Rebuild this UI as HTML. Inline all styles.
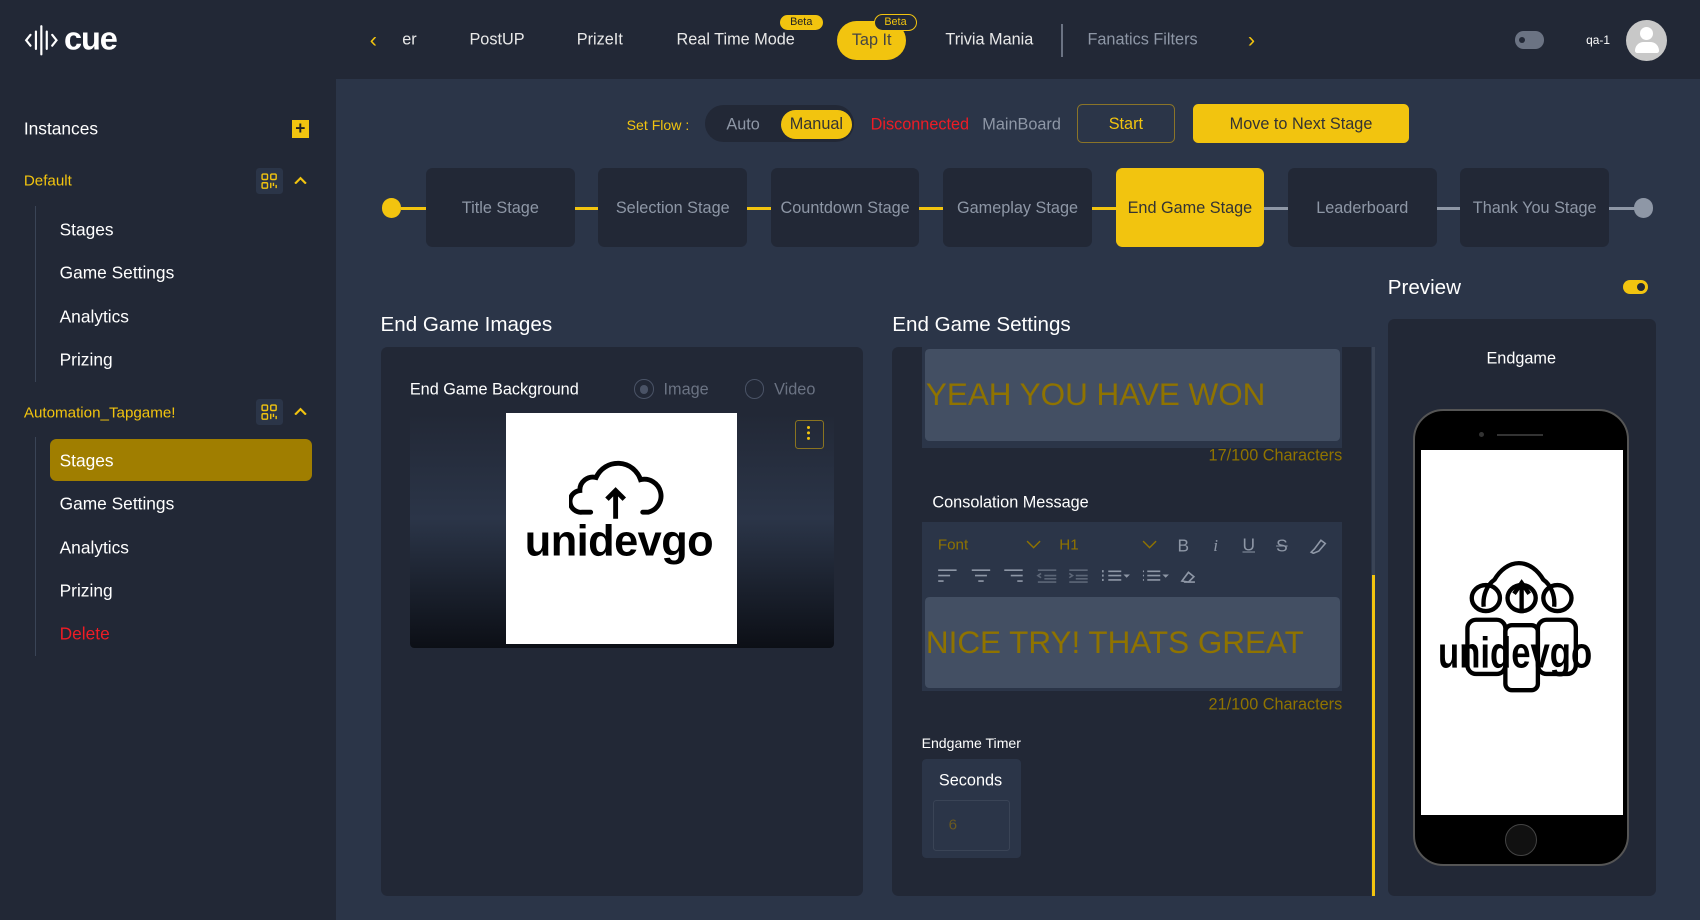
<!DOCTYPE html>
<html><head><meta charset="utf-8"><style>
html,body{margin:0;padding:0;width:1700px;height:920px;overflow:hidden;background:#2b3548}
#w{position:relative;width:1568px;height:849px;zoom:1.0842;font-family:"Liberation Sans",Arial,sans-serif;color:#e8e8e8;background:#2b3548;overflow:hidden}
.a{position:absolute}
.t{position:absolute;white-space:nowrap;transform:translateY(-50%)}
.y{color:#f2c40f}
.stage{position:absolute;top:155px;width:137px;height:73px;background:#222836;border-radius:6px;color:#8e97a6;font-size:15px;display:flex;align-items:center;justify-content:center}
.ln{position:absolute;top:191px;height:3px}
.side{font-size:16px;color:#fff}
</style></head><body><div id="w">
<div class="a" style="left:0;top:0;width:1568px;height:73px;background:#222836"></div>
<div class="a" style="left:0;top:0;width:310px;height:849px;background:#222836"></div>
<svg class="a" style="left:22px;top:22px" width="32" height="30" viewBox="0 0 32 30"><g stroke="#fff" stroke-width="2" fill="none" stroke-linecap="round"><path d="M6 10 L2 15 L6 20"/><path d="M11 7V23"/><path d="M16 2V28"/><path d="M21 7V23"/><path d="M26 10 L30 15 L26 20"/></g></svg>
<div class="t" style="left:59px;top:36px;font-size:30px;font-weight:bold;color:#fff;letter-spacing:-1px">cue</div>
<div class="t y" style="left:341px;top:37px;font-size:20px">&#8249;</div>
<div class="t" style="left:371px;top:37px;font-size:15px">er</div>
<div class="t" style="left:433px;top:37px;font-size:15px">PostUP</div>
<div class="t" style="left:532px;top:37px;font-size:15px">PrizeIt</div>
<div class="t" style="left:624px;top:37px;font-size:15px">Real Time Mode</div>
<div class="a" style="left:719px;top:14px;width:40px;height:14px;border-radius:8px;background:#f2c40f;color:#222;font-size:10px;text-align:center;line-height:14px">Beta</div>
<div class="a" style="left:772px;top:19px;width:64px;height:36px;border-radius:18px;background:#f2c40f;color:#444;font-size:15px;text-align:center;line-height:36px">Tap It</div>
<div class="a" style="left:806px;top:13px;width:38px;height:14px;border-radius:8px;background:#222836;border:1px solid #f2c40f;color:#f2c40f;font-size:10px;text-align:center;line-height:14px">Beta</div>
<div class="t" style="left:872px;top:37px;font-size:15px">Trivia Mania</div>
<div class="a" style="left:979px;top:22px;width:1px;height:31px;background:#6b7383"></div>
<div class="t" style="left:1003px;top:37px;font-size:15px;color:#8e97a6">Fanatics Filters</div>
<div class="t y" style="left:1151px;top:37px;font-size:20px">&#8250;</div>
<div class="a" style="left:1397px;top:29px;width:27px;height:16px;border-radius:8px;background:#6b7383"></div>
<div class="a" style="left:1401px;top:34px;width:6px;height:6px;border-radius:3px;background:#222836"></div>
<div class="t" style="left:1463px;top:37px;font-size:11px;color:#fff">qa-1</div>
<div class="a" style="left:1500px;top:18px;width:38px;height:38px;border-radius:19px;background:#c8c8c8"></div>
<div class="a" style="left:1513px;top:25px;width:12px;height:12px;border-radius:6px;background:#fff"></div>
<div class="a" style="left:1508px;top:39px;width:22px;height:10px;border-radius:8px 8px 2px 2px;background:#fff"></div>
<div class="t side" style="left:22px;top:119px">Instances</div>
<div class="a" style="left:269px;top:111px;width:16px;height:16px;background:#f2c40f;color:#222;font-size:16px;line-height:15px;text-align:center;font-weight:bold">+</div>
<div class="t y" style="left:22px;top:167px;font-size:14px">Default</div>
<div class="a" style="left:236px;top:155px;width:25px;height:24px;background:#2b3548;border-radius:3px"></div>
<svg class="a" style="left:241px;top:160px" width="15" height="15" viewBox="0 0 15 15"><g stroke="#f2c40f" fill="none" stroke-width="1.3"><rect x="1" y="1" width="5" height="5" rx="1"/><rect x="9" y="1" width="5" height="5" rx="1"/><rect x="1" y="9" width="5" height="5" rx="1"/><path d="M9 9v5M11.5 9v3M14 11v3"/></g></svg>
<svg class="a" style="left:271px;top:162px" width="12" height="8"><path d="M1 7L6 2L11 7" stroke="#f2c40f" stroke-width="2" fill="none"/></svg>
<div class="a" style="left:32px;top:190px;width:1px;height:162px;background:#3a4456"></div>
<div class="t side" style="left:55px;top:212px">Stages</div>
<div class="t side" style="left:55px;top:252px">Game Settings</div>
<div class="t side" style="left:55px;top:292px">Analytics</div>
<div class="t side" style="left:55px;top:332px">Prizing</div>
<div class="t y" style="left:22px;top:381px;font-size:14px">Automation_Tapgame!</div>
<div class="a" style="left:236px;top:368px;width:25px;height:24px;background:#2b3548;border-radius:3px"></div>
<svg class="a" style="left:241px;top:373px" width="15" height="15" viewBox="0 0 15 15"><g stroke="#f2c40f" fill="none" stroke-width="1.3"><rect x="1" y="1" width="5" height="5" rx="1"/><rect x="9" y="1" width="5" height="5" rx="1"/><rect x="1" y="9" width="5" height="5" rx="1"/><path d="M9 9v5M11.5 9v3M14 11v3"/></g></svg>
<svg class="a" style="left:271px;top:375px" width="12" height="8"><path d="M1 7L6 2L11 7" stroke="#f2c40f" stroke-width="2" fill="none"/></svg>
<div class="a" style="left:32px;top:403px;width:1px;height:202px;background:#3a4456"></div>
<div class="a" style="left:46px;top:405px;width:242px;height:39px;background:#a07e00;border-radius:6px"></div>
<div class="t side" style="left:55px;top:425px">Stages</div>
<div class="t side" style="left:55px;top:465px">Game Settings</div>
<div class="t side" style="left:55px;top:505px">Analytics</div>
<div class="t side" style="left:55px;top:545px">Prizing</div>
<div class="t" style="left:55px;top:585px;font-size:16px;color:#ee1c25">Delete</div>
<div class="t y" style="left:578px;top:115px;font-size:13px">Set Flow :</div>
<div class="a" style="left:650px;top:97px;width:138px;height:34px;border-radius:17px;background:#222836"></div>
<div class="t" style="left:670px;top:115px;font-size:15px;color:#8e97a6">Auto</div>
<div class="a" style="left:720px;top:101px;width:66px;height:27px;border-radius:14px;background:#f2c40f;color:#333;font-size:15px;text-align:center;line-height:27px">Manual</div>
<div class="t" style="left:803px;top:115px;font-size:15px;color:#ee1c25">Disconnected</div>
<div class="t" style="left:906px;top:115px;font-size:15px;color:#8e97a6">MainBoard</div>
<div class="a" style="left:993px;top:96px;width:89px;height:34px;border:1px solid #8a7428;border-radius:5px;color:#f2c40f;font-size:15px;text-align:center;line-height:36px">Start</div>
<div class="a" style="left:1100px;top:96px;width:200px;height:36px;background:#f2c40f;border-radius:5px;color:#333;font-size:15px;text-align:center;line-height:38px">Move to Next Stage</div>
<div class="a" style="left:352px;top:183px;width:18px;height:18px;border-radius:9px;background:#f2c40f"></div>
<div class="ln" style="left:370px;width:23px;background:#f2c40f"></div>
<div class="ln" style="left:530px;width:22px;background:#f2c40f"></div>
<div class="ln" style="left:689px;width:22px;background:#f2c40f"></div>
<div class="ln" style="left:848px;width:22px;background:#f2c40f"></div>
<div class="ln" style="left:1007px;width:22px;background:#f2c40f"></div>
<div class="ln" style="left:1166px;width:22px;background:#8e97a6"></div>
<div class="ln" style="left:1325px;width:22px;background:#8e97a6"></div>
<div class="ln" style="left:1484px;width:24px;background:#8e97a6"></div>
<div class="a" style="left:1507px;top:183px;width:18px;height:18px;border-radius:9px;background:#8e97a6"></div>
<div class="stage" style="left:393px;padding-top:2px;box-sizing:border-box">Title Stage</div>
<div class="stage" style="left:552px;padding-top:2px;box-sizing:border-box">Selection Stage</div>
<div class="stage" style="left:711px;padding-top:2px;box-sizing:border-box">Countdown Stage</div>
<div class="stage" style="left:870px;padding-top:2px;box-sizing:border-box">Gameplay Stage</div>
<div class="stage" style="left:1029px;background:#f2c40f;color:#333;padding-top:2px;box-sizing:border-box">End Game Stage</div>
<div class="stage" style="left:1188px;padding-top:2px;box-sizing:border-box">Leaderboard</div>
<div class="stage" style="left:1347px;padding-top:2px;box-sizing:border-box">Thank You Stage</div>
<div class="t" style="left:351px;top:300px;font-size:19px;color:#fff">End Game Images</div>
<div class="a" style="left:351px;top:320px;width:445px;height:506px;background:#222836;border-radius:6px"></div>
<div class="t" style="left:378px;top:360px;font-size:15px;color:#fff">End Game Background</div>
<div class="a" style="left:585px;top:350px;width:16px;height:16px;border-radius:9px;border:1px solid #4a5366"></div>
<div class="a" style="left:590px;top:355px;width:8px;height:8px;border-radius:4px;background:#4a5366"></div>
<div class="t" style="left:612px;top:360px;font-size:15px;color:#6b7383">Image</div>
<div class="a" style="left:687px;top:350px;width:16px;height:16px;border-radius:9px;border:1px solid #4a5366"></div>
<div class="t" style="left:714px;top:360px;font-size:15px;color:#6b7383">Video</div>
<div class="a" style="left:378px;top:381px;width:391px;height:217px;border-radius:4px;background:linear-gradient(#222836 0%,#2b3548 45%,#0c0f16 100%)"></div>
<div class="a" style="left:467px;top:381px;width:213px;height:213px;background:#fff"></div>
<svg class="a" style="left:525px;top:422px" width="90" height="60" viewBox="0 0 90 60"><path d="M20 50 H12 A10 10 0 0 1 10 30 A12 12 0 0 1 25 18 A22 22 0 0 1 66 20 A15 15 0 0 1 73 50 H68" stroke="#000" stroke-width="4.5" fill="none" stroke-linecap="round"/><path d="M43 56V30M35 38L43 30L51 38" stroke="#000" stroke-width="4.5" fill="none"/></svg>
<div class="t" style="left:484px;top:500px;font-size:40px;font-weight:bold;color:#000;letter-spacing:-0.5px">unidevgo</div>
<div class="a" style="left:733px;top:387px;width:25px;height:25px;border:1px solid #8a7420;border-radius:3px"></div>
<div class="a" style="left:744px;top:393px;width:3px;height:3px;border-radius:2px;background:#f2c40f;box-shadow:0 5px 0 #f2c40f,0 10px 0 #f2c40f"></div>
<div class="t" style="left:823px;top:300px;font-size:19px;color:#fff">End Game Settings</div>
<div class="a" style="left:823px;top:320px;width:442px;height:506px;background:#222836;border-radius:6px 0 0 6px"></div>
<div class="a" style="left:1265px;top:320px;width:3px;height:506px;background:#3a4456"></div>
<div class="a" style="left:1265px;top:530px;width:3px;height:296px;background:#f2c40f"></div>
<div class="a" style="left:850px;top:320px;width:388px;height:93px;background:#2b3548"></div>
<div class="a" style="left:853px;top:322px;width:383px;height:85px;background:#434f63;border-radius:4px"></div>
<div class="t" style="left:854px;top:364px;font-size:29px;color:#8f7300">YEAH YOU HAVE WON</div>
<div class="t" style="right:330px;top:421px;font-size:15px;color:#8f7300">17/100 Characters</div>
<div class="t" style="left:860px;top:464px;font-size:15px;color:#fff">Consolation Message</div>
<div class="a" style="left:850px;top:481px;width:388px;height:156px;background:#2b3548"></div>
<div class="t" style="left:865px;top:503px;font-size:14px;color:#8f7300">Font</div>
<svg class="a" style="left:946px;top:498px" width="14" height="8"><path d="M1 1L7 7L13 1" stroke="#8f7300" stroke-width="1.3" fill="none"/></svg>
<div class="t" style="left:977px;top:503px;font-size:14px;color:#8f7300">H1</div>
<svg class="a" style="left:1053px;top:498px" width="14" height="8"><path d="M1 1L7 7L13 1" stroke="#8f7300" stroke-width="1.3" fill="none"/></svg>
<div class="t" style="left:1086px;top:504px;font-size:16px;color:#8e97a6">B</div>
<div class="t" style="left:1119px;top:504px;font-size:16px;color:#8e97a6;font-style:italic;font-family:'Liberation Serif',serif">i</div>
<div class="t" style="left:1146px;top:503px;font-size:16px;color:#8e97a6;text-decoration:underline">U</div>
<div class="t" style="left:1177px;top:504px;font-size:16px;color:#8e97a6;text-decoration:line-through">S</div>
<svg class="a" style="left:1207px;top:495px" width="17" height="16"><path d="M2 14L5 11L11 3L15 6L9 13L4 15Z" stroke="#8e97a6" stroke-width="1.5" fill="none"/></svg>
<svg class="a" style="left:864px;top:524px" width="240" height="15" viewBox="0 0 240 15"><g stroke="#8e97a6" stroke-width="1.5" fill="none"><path d="M1 2H18M1 7H12M1 12H6"/><path d="M32 2H49M35 7H46M38 12H43"/><path d="M62 2H79M68 7H79M74 12H79"/><path d="M93 2H110M99 7H110M99 10H110M93 13H110M96 5L93 7L96 9" opacity=".5"/><path d="M122 2H139M128 7H139M128 10H139M122 13H139M122 5L125 7L122 9" opacity=".5"/><path d="M158 3H170M158 7H170M158 11H170M153 2v2M153 6v2M153 10v2"/><path d="M194 3H206M194 7H206M194 11H206M190 3h1M190 7h1M190 11h1"/><path d="M228 13H238M226 12L232 4L237 8L232 13Z"/></g><path d="M172 6H178L175 9Z M208 6H214L211 9Z" fill="#8e97a6"/></svg>
<div class="a" style="left:853px;top:551px;width:383px;height:84px;background:#434f63;border-radius:4px"></div>
<div class="t" style="left:854px;top:593px;font-size:29px;color:#8f7300">NICE TRY! THATS GREAT</div>
<div class="t" style="right:330px;top:650px;font-size:15px;color:#8f7300">21/100 Characters</div>
<div class="t" style="left:850px;top:685px;font-size:13px;color:#fff">Endgame Timer</div>
<div class="a" style="left:850px;top:700px;width:92px;height:91px;background:#2b3548;border-radius:4px"></div>
<div class="t" style="left:866px;top:720px;font-size:15px;color:#fff">Seconds</div>
<div class="a" style="left:861px;top:738px;width:69px;height:45px;border:1px solid #3a4456;border-radius:3px"></div>
<div class="t" style="left:875px;top:761px;font-size:14px;color:#6b5a20">6</div>
<div class="t" style="left:1280px;top:266px;font-size:19px;color:#fff">Preview</div>
<div class="a" style="left:1497px;top:258px;width:23px;height:13px;border-radius:7px;background:#f2c40f"></div>
<div class="a" style="left:1510px;top:261px;width:7px;height:7px;border-radius:4px;background:#222836"></div>
<div class="a" style="left:1280px;top:294px;width:247px;height:532px;background:#222836;border-radius:6px"></div>
<div class="t" style="left:1371px;top:331px;font-size:15px;color:#fff">Endgame</div>
<div class="a" style="left:1303px;top:377px;width:196px;height:418px;background:#000;border-radius:28px;border:2px solid #555"></div>
<div class="a" style="left:1311px;top:415px;width:186px;height:337px;background:#fff"></div>
<div class="a" style="left:1364px;top:398px;width:5px;height:5px;border-radius:3px;background:#333"></div>
<div class="a" style="left:1381px;top:400px;width:42px;height:2px;background:#333"></div>
<div class="a" style="left:1388px;top:760px;width:28px;height:28px;border-radius:15px;border:1px solid #444;background:#111"></div>
<svg class="a" style="left:1348px;top:480px" width="110" height="160" viewBox="0 0 110 160"><g stroke="#000" stroke-width="4" fill="none"><path d="M20 80 A20 25 0 0 1 30 55 A30 45 0 0 1 75 55 A20 25 0 0 1 85 80"/><ellipse cx="22" cy="72" rx="13" ry="12"/><ellipse cx="55" cy="72" rx="13" ry="12"/><ellipse cx="88" cy="72" rx="13" ry="12"/><path d="M55 86V60M48 68L55 58L62 68"/><rect x="5" y="92" width="35" height="50" rx="8"/><rect x="40" y="97" width="30" height="60" rx="6"/><rect x="70" y="92" width="35" height="50" rx="8"/></g></svg>
<div class="t" style="left:1326px;top:603px;font-size:40px;font-weight:bold;color:#000;transform:translateY(-50%) scaleX(.8);transform-origin:left">unidevgo</div>
</div></body></html>
